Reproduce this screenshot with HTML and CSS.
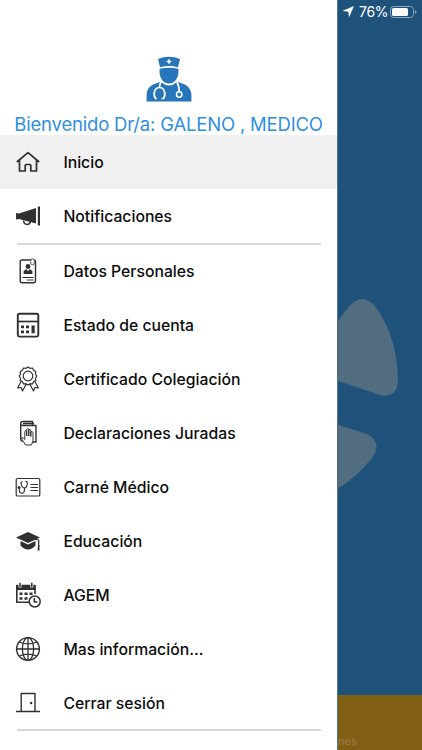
FILE: index.html
```html
<!DOCTYPE html>
<html lang="es">
<head>
<meta charset="utf-8">
<title>Menú</title>
<link rel="stylesheet" href="styles.css">
</head>
<body>
<div class="app">
  <aside class="drawer">
    <header class="profile">
      <svg class="avatar" width="46" height="47" viewBox="0 0 46 47">
        <path fill="#2775bb" d="M12 3Q23 -1.500 34 3L32 11.200Q23 9 14 11.200ZM13.700 12.800Q23 10.800 32.300 12.800C33.500 21 29 27.500 23 27.500S12.500 21 13.700 12.800ZM.6 45.500V38C1.500 30 8 27.500 15 26Q23 33 31 26C38 27.500 44.500 30 45.400 38V45.500Z"/>
        <path stroke="#fff" stroke-width="1.500" d="M23 3.200V7.800M20.700 5.500H25.300"/>
        <path fill="none" stroke="#fff" stroke-width="1.700" d="M15 26Q13.500 29 13.500 31M11 42.500H9.500C7 39 8 31.500 13.500 31.500S20 39 17.500 42.500H15.500M31 26Q33.500 31 33.200 36"/>
        <circle cx="33.200" cy="38.500" r="2.700" fill="#2775bb" stroke="#fff" stroke-width="1.500"/>
      </svg>
      <h1 class="welcome">Bienvenido Dr/a: GALENO , MEDICO</h1>
    </header>
    <nav>
      <a class="item active">
        <svg class="icon" viewBox="0 0 26 26"><path d="M1.800 13 13 3.700 24.200 13M4.500 11V22H10.200V16.500Q10.200 15.500 11.200 15.500H14.800Q15.800 15.500 15.800 16.500V22H21.500V11" stroke-width="1.700"/></svg>
        <span>Inicio</span></a>
      <a class="item">
        <svg class="icon" viewBox="0 0 26 26"><path class="solid" d="M1 10 4 10.500 21 5V20.500L4 16 1 16.500ZM22.800 3.500H25V22.500H22.800Z"/><path d="M8.500 17.500C9 22.500 14.500 22.500 15.500 18.500" stroke-width="1.500"/></svg>
        <span>Notificaciones</span></a>
      <hr class="divider">
      <a class="item">
        <svg class="icon" viewBox="0 0 26 26"><rect x="5.200" y="2" width="15.300" height="22.800" rx="2" stroke-width="1.400"/><circle class="solid" cx="13" cy="8.500" r="2.400"/><path class="solid" d="M8.600 16V13L11.500 11 13 13.500 14.500 11 17.400 13V16Z"/><path d="M7.500 19.500H18.500M12 22H18.500" stroke-width="1"/><rect x="15.800" y=".8" width="3.500" height="6" rx="1.700" fill="#fff" stroke-width=".8"/></svg>
        <span>Datos Personales</span></a>
      <a class="item">
        <svg class="icon" viewBox="0 0 26 26"><rect x="2.800" y="1.800" width="20.500" height="22.800" rx="1.500" stroke-width="1.900"/><path d="M3 9.500H23" stroke-width="1.700"/><path class="solid" d="M6 13.500h3v2.700H6zM11 13.500h3v2.700h-3zM6 18.500h3v2.700H6zM11 18.500h3v2.700h-3zM16.500 13.500h3.200v7.700h-3.200z"/></svg>
        <span>Estado de cuenta</span></a>
      <a class="item">
        <svg class="icon" viewBox="0 0 26 26"><path d="M13 1 15 2.300 17.500 2 18.500 4.300 20.700 5.500 20.500 8 21.800 10 20.500 12.200 20.700 14.500 18.500 15.700 17.500 18 15 17.700 13 19 11 17.700 8.500 18 7.500 15.700 5.300 14.500 5.500 12.200 4.200 10 5.500 8 5.300 5.500 7.500 4.300 8.500 2 11 2.300ZM6 15.500 2.700 22 6 21.500 7.500 25 11 18.500M20 15.500 23.300 22 20 21.500 18.500 25 15 18.500" stroke-width="1.200"/><circle cx="13" cy="10" r="4.800" stroke-width="1.200"/></svg>
        <span>Certificado Colegiación</span></a>
      <a class="item">
        <svg class="icon" viewBox="0 0 26 26"><path d="M7.500 21.500Q5.700 21 5.700 19V3.500Q5.700 1.500 7.700 1.500H17.500V5.500H7.700Q5.700 5.500 5.700 3.500M8 3.500H19M17.500 5.500H21V22H18" stroke-width="1.400"/><path d="M10.500 25 6.500 18.500Q6.500 16.800 8.200 17.800L9.800 19.500V11.200Q10.700 9.500 11.700 11V16 9.200Q12.700 7.800 13.800 9.200V16 9.700Q15 8.700 15.800 10.200V16.500 12Q17.200 11 18 12.500V20.500L16.500 25Z" fill="#fff" stroke-width="1"/></svg>
        <span>Declaraciones Juradas</span></a>
      <a class="item">
        <svg class="icon" viewBox="0 0 26 26"><rect x="1.200" y="4.500" width="23.600" height="17.500" rx="1.300" stroke-width="1.200"/><path d="M7.500 7.500 6 8.500C6 12 8 14 9.500 14S13 11 12.200 8L10.500 7.300M9.500 14V15.500C9.500 20.500 4.500 20 4.300 16.500V14.500M15.500 10.500H23M15.500 13.500H23M15.500 16.500H23" stroke-width="1.100"/><circle class="solid" cx="4" cy="13.500" r="1.500"/></svg>
        <span>Carné Médico</span></a>
      <a class="item">
        <svg class="icon" viewBox="0 0 26 26"><path class="solid" d="M1 9.500 13 4 25 9.500 13 15ZM5.500 13 13 16.500 20.500 13V17.500Q17 21.500 13 21.500T5.500 17.500Z"/><path d="M13 10 23.700 12V18" stroke-width="1.200"/><path class="solid" d="M23 17H24.500V22.500H22.700Z"/></svg>
        <span>Educación</span></a>
      <a class="item">
        <svg class="icon" viewBox="0 0 26 26"><path d="M14 20.300H1.800V3.500H20V12" stroke-width="1.600"/><path class="solid" d="M1.500 3.500H20.500V8H1.500ZM4.500 10.500h3v2.500h-3zM9.500 10.500h3v2.500h-3zM14.500 10.500h3v2.500h-3zM4.500 15.200h3v2.500h-3zM9.500 15.200h3v2.500h-3z"/><path d="M5 1V5.500M16.800 1V5.500" stroke="#fff" stroke-width="3"/><path d="M5 .8V5M16.800 .8V5" stroke-width="1.500"/><circle cx="19.700" cy="19.500" r="5.500" fill="#fff" stroke-width="1.500"/><path d="M19.300 16V20H22.500" stroke-width="1.500"/></svg>
        <span>AGEM</span></a>
      <a class="item">
        <svg class="icon" viewBox="0 0 26 26"><circle cx="13" cy="13" r="11.400" stroke-width="1.400"/><ellipse cx="13" cy="13" rx="5.600" ry="11.400" stroke-width="1.300"/><path d="M13 1.600V24.400M1.600 13H24.400M4.200 6Q13 9.800 21.800 6M4.200 20Q13 16.200 21.800 20" stroke-width="1.300"/></svg>
        <span>Mas información...</span></a>
      <a class="item">
        <svg class="icon" viewBox="0 0 26 26"><path d="M1 21.500H25M6.200 21.500V3.500H20V21.500" stroke-width="1.400"/><circle class="solid" cx="16.200" cy="13" r="1.200"/></svg>
        <span>Cerrar sesión</span></a>
      <hr class="divider">
    </nav>
  </aside>
  <main class="page">
    <div class="status">
      <svg width="11" height="11" viewBox="0 0 11 11"><path fill="#fff" stroke="#fff" stroke-width=".5" d="M10.500 .5 6.200 10.500 5.500 5.500 .3 4.800Z"/></svg>
      <span class="percent">76%</span>
      <svg width="27" height="12" viewBox="0 0 27 12"><rect x=".5" y=".5" width="23" height="11" rx="3" fill="none" stroke="#8ba6bd"/><rect x="2" y="2" width="16" height="8" rx="1.600" fill="#fff"/><path fill="#8ba6bd" d="M25 4Q26.500 4.500 26.500 6T25 8Z"/></svg>
    </div>
    <svg class="petals" width="85" height="200" viewBox="0 0 85 200">
      <path fill="#526c80" d="M0 32 13 15.500Q24 3 36.500 14.500C51 32 61 60 61 91Q61 98 57 102 51 107.500 43 105L0 90.500ZM0 134.500 30 144Q40 149 39.500 158 39 163 35 168 18 189 0 199Z"/>
    </svg>
    <footer class="tabs">nes</footer>
  </main>
</div>
</body>
</html>
```
FILE: styles.css
```css
* { box-sizing: border-box; }
body { margin: 0; font-family: Inter, "Liberation Sans", sans-serif; }
.app { display: flex; width: 422px; height: 750px; overflow: hidden; }
.drawer { width: 337px; flex: none; background: #fff; }
.profile { height: 135px; padding-top: 56px; display: flex; flex-direction: column; align-items: center; }
.avatar { display: block; flex: none; }
.welcome { margin: 10px 0 0; font-size: 18.5px; line-height: 22px; font-weight: 400; letter-spacing: -0.19px; color: #2f90e0; white-space: nowrap; }
.item { display: flex; align-items: center; height: 54px; padding-left: 15.4px; gap: 22px; color: #0c0c0c; font-size: 15.75px; font-weight: 550; white-space: nowrap; }
.active { background: #f1f1f1; }
.icon { width: 26px; height: 26px; flex: none; fill: none; stroke: #303030; stroke-linejoin: round; }
.icon .solid { fill: #303030; stroke: none; }
.divider { height: 2px; margin: 0 16px -1px 17px; border: 0; background: #d8d8d8; }
.divider:last-child { margin: -1px 16px 0 17px; }
.page { display: flex; flex-direction: column; flex: 1; min-width: 0; background: #1f527a; border-left: 1px solid #54768f; }
.status { display: flex; align-items: center; height: 23px; padding-left: 5px; color: #fff; font-size: 14px; }
.percent { margin: 0 2px 0 5px; letter-spacing: -0.3px; }
.petals { display: block; flex: none; margin: 267px 0 0 -1px; }
.tabs { margin-top: auto; height: 55px; padding-top: 40px; background: #805e14; color: #98783f; font-size: 11px; line-height: 13px; font-weight: 500; }
```
